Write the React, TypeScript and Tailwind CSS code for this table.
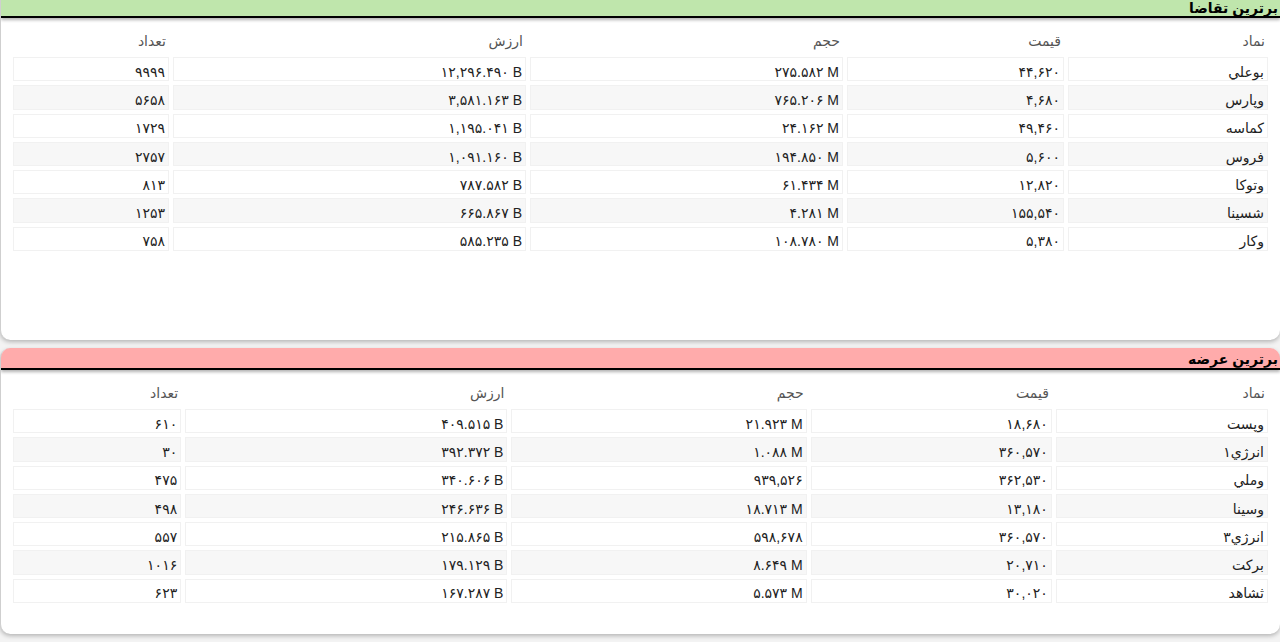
import React from "react";

type Row = [string, string, string, string, string];

const DEMAND: Row[] = [
  ["بوعلي", "۴۴,۶۲۰", "۲۷۵.۵۸۲ M", "۱۲,۲۹۶.۴۹۰ B", "۹۹۹۹"],
  ["وپارس", "۴,۶۸۰", "۷۶۵.۲۰۶ M", "۳,۵۸۱.۱۶۳ B", "۵۶۵۸"],
  ["كماسه", "۴۹,۴۶۰", "۲۴.۱۶۲ M", "۱,۱۹۵.۰۴۱ B", "۱۷۲۹"],
  ["فروس", "۵,۶۰۰", "۱۹۴.۸۵۰ M", "۱,۰۹۱.۱۶۰ B", "۲۷۵۷"],
  ["وتوكا", "۱۲,۸۲۰", "۶۱.۴۳۴ M", "۷۸۷.۵۸۲ B", "۸۱۳"],
  ["شسينا", "۱۵۵,۵۴۰", "۴.۲۸۱ M", "۶۶۵.۸۶۷ B", "۱۲۵۳"],
  ["وكار", "۵,۳۸۰", "۱۰۸.۷۸۰ M", "۵۸۵.۲۳۵ B", "۷۵۸"],
];

const SUPPLY: Row[] = [
  ["وپست", "۱۸,۶۸۰", "۲۱.۹۲۳ M", "۴۰۹.۵۱۵ B", "۶۱۰"],
  ["انرژي۱", "۳۶۰,۵۷۰", "۱.۰۸۸ M", "۳۹۲.۳۷۲ B", "۳۰"],
  ["وملي", "۳۶۲,۵۳۰", "۹۳۹,۵۲۶", "۳۴۰.۶۰۶ B", "۴۷۵"],
  ["وسينا", "۱۳,۱۸۰", "۱۸.۷۱۳ M", "۲۴۶.۶۳۶ B", "۴۹۸"],
  ["انرژي۳", "۳۶۰,۵۷۰", "۵۹۸,۶۷۸", "۲۱۵.۸۶۵ B", "۵۵۷"],
  ["بركت", "۲۰,۷۱۰", "۸.۶۴۹ M", "۱۷۹.۱۲۹ B", "۱۰۱۶"],
  ["ثشاهد", "۳۰,۰۲۰", "۵.۵۷۳ M", "۱۶۷.۲۸۷ B", "۶۲۳"],
];

const HEADERS = ["نماد", "قیمت", "حجم", "ارزش", "تعداد"];

function MarketTable({ rows, widths }: { rows: Row[]; widths: string[] }) {
  return (
    <table className="w-full table-fixed border-separate border-spacing-[4px] text-[14px]">
      <colgroup>
        {widths.map((w, i) => (
          <col key={i} className={w} />
        ))}
      </colgroup>
      <thead>
        <tr>
          {HEADERS.map((h) => (
            <th key={h} className="h-[24px] px-[3px] text-right font-normal text-[#555]">
              {h}
            </th>
          ))}
        </tr>
      </thead>
      <tbody>
        {rows.map((row, ri) => (
          <tr key={row[0]} className={ri % 2 === 1 ? "bg-[#f7f7f7]" : "bg-white"}>
            {row.map((cell, ci) => (
              <td
                key={ci}
                className="h-[24.3px] border border-[#f1f1f1] px-[3px] pt-[5px] pb-0 text-right leading-[16px] text-[#222]"
              >
                {ci === 0 ? cell : <span dir="ltr">{cell}</span>}
              </td>
            ))}
          </tr>
        ))}
      </tbody>
    </table>
  );
}

export default function App() {
  return (
    <div
      dir="rtl"
      className="min-h-screen bg-[#f3f3f3] font-['Liberation_Sans','DejaVu_Sans',sans-serif]"
    >
      <section className="h-[340px] overflow-hidden rounded-b-[10px] border-l border-[#cfcfcf] bg-white shadow-[0_2px_4px_rgba(0,0,0,0.25)]">
        <div className="h-[18px] border-b-2 border-black bg-[#bfe6ac] px-[2px] text-[14px] font-bold leading-[16px] text-black shadow-[0_2px_3px_rgba(0,0,0,0.3)]">
          برترین تقاضا
        </div>
        <div className="px-[8px] pt-[7px]">
          <MarketTable
            rows={DEMAND}
            widths={["w-[200px]", "w-[217px]", "w-[313px]", "w-[353px]", "w-[156px]"]}
          />
        </div>
      </section>

      <section className="mt-[8px] h-[286px] overflow-hidden rounded-[10px] border-l border-[#cfcfcf] bg-white shadow-[0_2px_4px_rgba(0,0,0,0.25)]">
        <div className="h-[22px] border-b-2 border-black bg-[#ffabab] px-[2px] pt-[3px] text-[14px] font-bold leading-[17px] text-black shadow-[0_2px_3px_rgba(0,0,0,0.3)]">
          برترین عرضه
        </div>
        <div className="px-[8px] pt-[7px]">
          <MarketTable
            rows={SUPPLY}
            widths={["w-[212px]", "w-[241px]", "w-[295px]", "w-[322px]", "w-[168px]"]}
          />
        </div>
      </section>
    </div>
  );
}
